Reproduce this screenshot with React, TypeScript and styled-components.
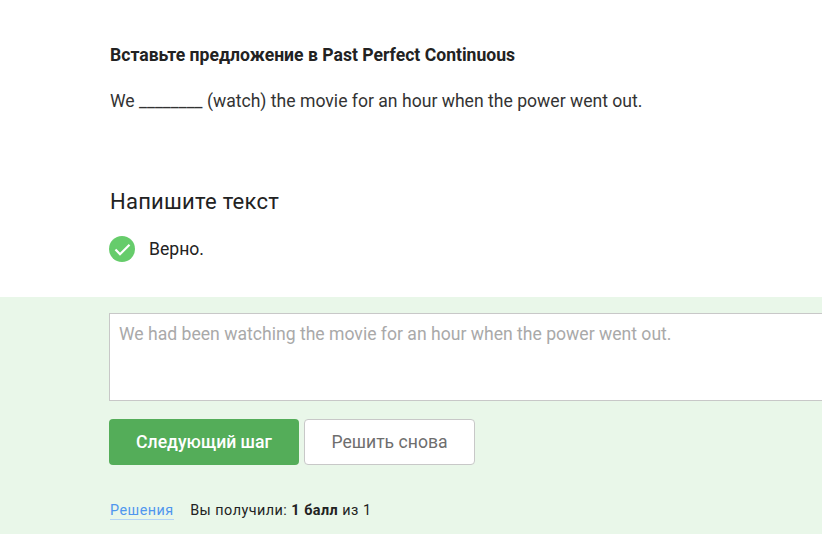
import React from "react";
import styled, { createGlobalStyle } from "styled-components";

const Global = createGlobalStyle`
  html, body { margin: 0; padding: 0; background: #fff; overflow: hidden; }
  body { font-family: Roboto, "Noto Sans", sans-serif; color: #222; width: 822px; height: 534px; }
`;
const Page = styled.div`
  width: 822px; height: 534px; display: flex; flex-direction: column; overflow: hidden;
`;
const Top = styled.div`
  height: 297px; box-sizing: border-box; padding: 44px 0 0 110px; flex: none;
`;
const Title = styled.h2`
  margin: 0; font-size: 17.6px; line-height: 22px; font-weight: 700; color: #222;
`;
const Sentence = styled.p`
  margin: 24px 0 0; font-size: 17.6px; line-height: 22px; font-weight: 400; color: #333;
`;
const Heading = styled.h3`
  margin: 76px 0 0; font-size: 22px; line-height: 28px; font-weight: 400; letter-spacing: .25px; color: #222;
`;
const Status = styled.div`
  margin: 20px 0 0 -1px; display: flex; align-items: center; gap: 14px; font-size: 17.6px; line-height: 26px; color: #222;
`;
const Feedback = styled.div`
  flex: 1; background: #e9f7e9; padding: 16px 0 0 109px;
`;
const Answer = styled.div`
  width: 760px; height: 88px; box-sizing: border-box; background: #fff; border: 1px solid #c8c8c8;
  padding: 9px 9px; font-size: 17.6px; line-height: 22px; color: #a9a9a9; white-space: nowrap;
`;
const Actions = styled.div`
  display: flex; gap: 5px; margin-top: 18px;
`;
const Button = styled.button<{ $primary?: boolean }>`
  height: 46px; box-sizing: border-box; border-radius: 4px; font-family: inherit; font-size: 17.6px; padding: 0;
  font-weight: ${(p) => (p.$primary ? 500 : 400)};
  width: ${(p) => (p.$primary ? "190px" : "171px")};
  background: ${(p) => (p.$primary ? "#54ad59" : "#fff")};
  color: ${(p) => (p.$primary ? "#fff" : "#6e6e6e")};
  border: ${(p) => (p.$primary ? "none" : "1px solid #c8c8c8")};
`;
const Meta = styled.div`
  margin: 36px 0 0 1px; display: flex; align-items: baseline; gap: 16.5px; font-size: 14.4px; line-height: 20px; letter-spacing: .47px; color: #222;
`;
const SolutionsLink = styled.a`
  color: #4f96ee; border-bottom: 1px solid #b5d5f5; line-height: 17px;
`;

export default function App() {
  return (
    <Page>
      <Global />
      <Top>
        <Title>Вставьте предложение в Past Perfect Continuous</Title>
        <Sentence>We ________ (watch) the movie for an hour when the power went out.</Sentence>
        <Heading>Напишите текст</Heading>
        <Status>
          <svg width="26" height="26" viewBox="0 0 26 26" aria-hidden="true">
            <circle cx="13" cy="13" r="13" fill="#66cc6b" />
            <path d="M6.5 13.5l4.5 4.7L20.5 8.7" fill="none" stroke="#fff" strokeWidth="2.2" />
          </svg>
          <span>Верно.</span>
        </Status>
      </Top>
      <Feedback>
        <Answer>We had been watching the movie for an hour when the power went out.</Answer>
        <Actions>
          <Button $primary>Следующий шаг</Button>
          <Button>Решить снова</Button>
        </Actions>
        <Meta>
          <SolutionsLink>Решения</SolutionsLink>
          <span>Вы получили: <b>1 балл</b> из 1</span>
        </Meta>
      </Feedback>
    </Page>
  );
}
